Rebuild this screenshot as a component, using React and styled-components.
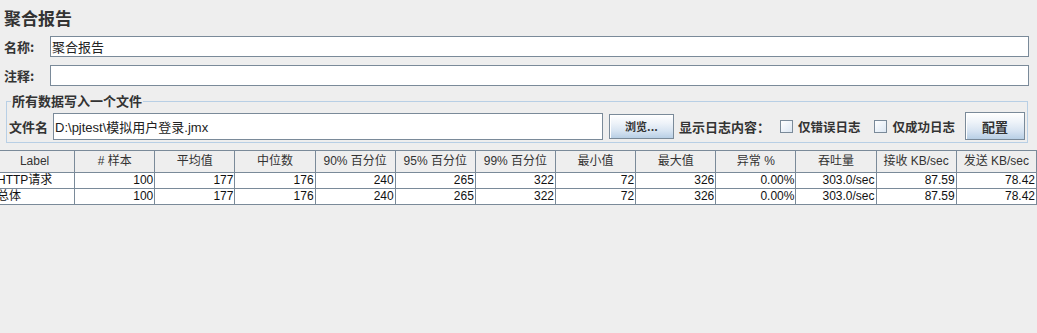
import React from "react";
import styled, { createGlobalStyle } from "styled-components";

const GlobalStyle = createGlobalStyle`
  body {
    margin: 0;
    background: #eeeeee;
    font-family: "Liberation Sans", "Noto Sans CJK SC", sans-serif;
    color: #333333;
  }
`;

const Page = styled.div`
  width: 1037px;
  height: 333px;
  overflow: hidden;
  padding-top: 8px;
  box-sizing: border-box;
`;

const Title = styled.h1`
  margin: 0 0 8px 0;
  padding-left: 4px;
  font-family: "Noto Sans CJK SC", sans-serif;
  font-size: 17px;
  line-height: 20px;
  font-weight: bold;
  color: #333333;
`;

const FieldRow = styled.div`
  display: flex;
  align-items: center;
  padding: 0 8px 0 4px;
  margin-bottom: ${(p) => p.$gap || 0}px;
`;

const FieldLabel = styled.label`
  width: ${(p) => p.$width || 46}px;
  flex-shrink: 0;
  font-family: "Noto Sans CJK SC", sans-serif;
  font-size: 13px;
  font-weight: bold;
  color: #333333;
`;

const TextInput = styled.div`
  flex: 1;
  height: ${(p) => p.$height || 21}px;
  box-sizing: border-box;
  border: 1px solid #7a8a99;
  background: #ffffff;
  display: flex;
  align-items: center;
  padding-left: 1px;
  font-family: "Liberation Sans", "Noto Sans CJK SC", sans-serif;
  font-size: 13px;
  color: #222222;
  white-space: nowrap;
  overflow: hidden;
`;

const Group = styled.fieldset`
  margin: 7px 9px 7px 6px;
  padding: 3px 2px 2px 2px;
  border: 1px solid #b8cfe5;
  min-width: 0;
`;

const Legend = styled.legend`
  margin-left: 2px;
  padding: 0 1px;
  font-family: "Noto Sans CJK SC", sans-serif;
  font-size: 13px;
  line-height: 16px;
  font-weight: bold;
  color: #333333;
`;

const FileRow = styled.div`
  display: flex;
  align-items: center;
  height: 28px;
`;

const FileLabel = styled.span`
  margin-right: 5px;
  font-family: "Noto Sans CJK SC", sans-serif;
  font-size: 13px;
  font-weight: bold;
  color: #333333;
`;

const Button = styled.button`
  flex-shrink: 0;
  width: ${(p) => p.$width}px;
  height: ${(p) => p.$height}px;
  margin-left: ${(p) => p.$left || 0}px;
  padding: 0;
  border: 1px solid #7a8a99;
  border-radius: 0;
  background: linear-gradient(#ffffff 0%, #eef3f9 35%, #d6e3f1 70%, #b8cfe5 100%);
  font-family: "Noto Sans CJK SC", sans-serif;
  font-size: ${(p) => p.$size || 13}px;
  font-weight: bold;
  color: #333333;
  box-shadow: inset 1px 1px 0 #ffffff;
`;

const InlineLabel = styled.span`
  flex-shrink: 0;
  margin-left: ${(p) => p.$left || 0}px;
  font-family: "Noto Sans CJK SC", sans-serif;
  font-size: 13px;
  font-weight: bold;
  color: #333333;
`;

const CheckOption = styled.label`
  display: inline-flex;
  align-items: center;
  gap: 5px;
  flex-shrink: 0;
  margin-left: ${(p) => p.$left || 0}px;
  font-family: "Noto Sans CJK SC", sans-serif;
  font-size: 12.5px;
  font-weight: bold;
  color: #333333;
`;

const Box = styled.span`
  width: 13px;
  height: 13px;
  box-sizing: border-box;
  border: 1px solid #7a8a99;
  background: linear-gradient(135deg, #ffffff 0%, #dce7f3 100%);
`;

const Table = styled.table`
  margin-left: -6px;
  width: 1043px;
  table-layout: fixed;
  border-collapse: separate;
  border-spacing: 0;
  border-top: 1px solid #7a8a99;
  border-left: 1px solid #7a8a99;
  background: #ffffff;
  font-family: "Liberation Sans", "Noto Sans CJK SC", sans-serif;
  font-size: 12px;
`;

const HeadCell = styled.th`
  padding: 0;
  line-height: 21px;
  font-weight: normal;
  text-align: center;
  background: #eeeeee;
  color: #333333;
  border-right: 1px solid #7a8a99;
  border-bottom: 1px solid #7a8a99;
  white-space: nowrap;
  overflow: hidden;
`;

const Cell = styled.td`
  padding: 0 1px 0 2px;
  line-height: 15px;
  text-align: ${(p) => (p.$left ? "left" : "right")};
  color: #111111;
  border-right: 1px solid #7a8a99;
  border-bottom: 1px solid #7a8a99;
  white-space: nowrap;
  overflow: hidden;
`;

const columns = [
  "Label",
  "# 样本",
  "平均值",
  "中位数",
  "90% 百分位",
  "95% 百分位",
  "99% 百分位",
  "最小值",
  "最大值",
  "异常 %",
  "吞吐量",
  "接收 KB/sec",
  "发送 KB/sec",
];

const rows = [
  ["HTTP请求", "100", "177", "176", "240", "265", "322", "72", "326", "0.00%", "303.0/sec", "87.59", "78.42"],
  ["总体", "100", "177", "176", "240", "265", "322", "72", "326", "0.00%", "303.0/sec", "87.59", "78.42"],
];

const App = () => {
  return (
    <Page>
      <GlobalStyle />
      <Title>聚合报告</Title>

      <FieldRow $gap={8}>
        <FieldLabel>名称:</FieldLabel>
        <TextInput>聚合报告</TextInput>
      </FieldRow>
      <FieldRow>
        <FieldLabel>注释:</FieldLabel>
        <TextInput />
      </FieldRow>

      <Group>
        <Legend>所有数据写入一个文件</Legend>
        <FileRow>
          <FileLabel>文件名</FileLabel>
          <TextInput $height={27}>D:\pjtest\模拟用户登录.jmx</TextInput>
          <Button $width={65} $height={25} $left={6} $size={11}>
            浏览...
          </Button>
          <InlineLabel $left={5}>显示日志内容：</InlineLabel>
          <CheckOption $left={10}>
            <Box />
            仅错误日志
          </CheckOption>
          <CheckOption $left={14}>
            <Box />
            仅成功日志
          </CheckOption>
          <Button $width={60} $height={28} $left={10}>
            配置
          </Button>
        </FileRow>
      </Group>

      <Table>
        <thead>
          <tr>
            {columns.map((c) => (
              <HeadCell key={c}>{c}</HeadCell>
            ))}
          </tr>
        </thead>
        <tbody>
          {rows.map((r) => (
            <tr key={r[0]}>
              {r.map((v, i) => (
                <Cell key={i} $left={i === 0}>
                  {v}
                </Cell>
              ))}
            </tr>
          ))}
        </tbody>
      </Table>
    </Page>
  );
};

export default App;
